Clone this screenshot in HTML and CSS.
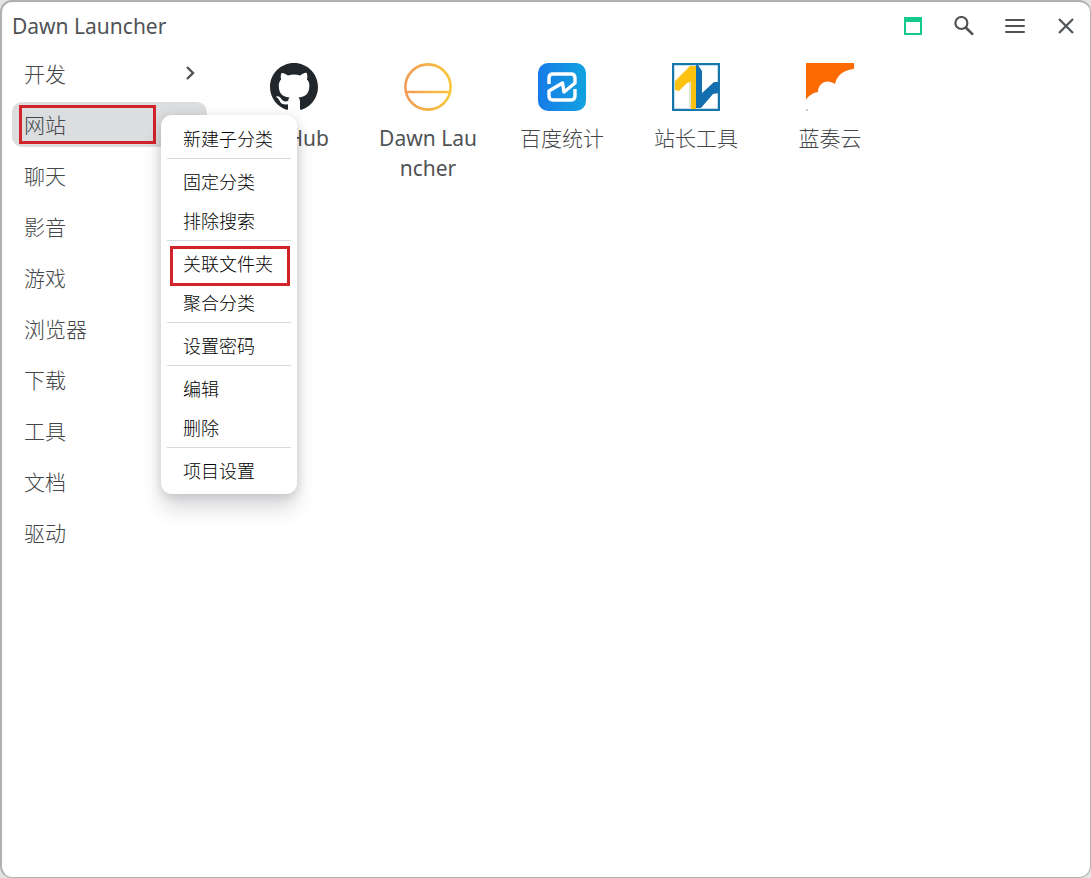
FILE: index.html
```html
<!DOCTYPE html>
<html lang="zh-CN">
<head>
<meta charset="utf-8">
<title>Dawn Launcher</title>
<link rel="stylesheet" href="styles.css">
</head>
<body>
<div class="window">
  <header class="titlebar">
    <h1 class="title">Dawn Launcher</h1>
    <div class="tools">
      <button class="tool" aria-label="窗口"><svg width="20" height="20" viewBox="0 0 20 20"><path d="M2 2h16v16H2z" fill="none" stroke="#12ca8b" stroke-width="2"/><path d="M1 1h18v5H1z" fill="#12ca8b"/></svg></button>
      <button class="tool" aria-label="搜索"><svg width="20" height="20" viewBox="0 0 20 20" fill="none" stroke="#505355" stroke-width="2.2"><circle cx="7.4" cy="7" r="6"/><path d="M11.7 11.5L19 18.6" stroke-width="2.6"/></svg></button>
      <button class="tool" aria-label="菜单"><svg width="22" height="20" viewBox="0 0 22 20" fill="none" stroke="#505355" stroke-width="2" stroke-linecap="round"><path d="M2 4h18M2 10h18M2 16h18"/></svg></button>
      <button class="tool" aria-label="关闭"><svg width="20" height="20" viewBox="0 0 20 20" fill="none" stroke="#505355" stroke-width="2.2"><path d="M3 3l14 14M17 3L3 17"/></svg></button>
    </div>
  </header>
  <div class="body">
    <nav class="sidebar">
      <button class="category">开发<svg width="12" height="14" viewBox="0 0 12 14" fill="none" stroke="#505355" stroke-width="2.4"><path d="M3 1l6 6-6 6"/></svg></button>
      <button class="category active">网站</button>
      <button class="category">聊天</button>
      <button class="category">影音</button>
      <button class="category">游戏</button>
      <button class="category">浏览器</button>
      <button class="category">下载</button>
      <button class="category">工具</button>
      <button class="category">文档</button>
      <button class="category">驱动</button>
    </nav>
    <main class="items">
      <button class="item latin">
        <svg width="48" height="48" viewBox="0 0 16 16"><path fill="#22272b" d="M8 0C3.58 0 0 3.58 0 8c0 3.54 2.29 6.53 5.47 7.59.4.07.55-.17.55-.38 0-.19-.01-.82-.01-1.49-2.01.37-2.53-.49-2.69-.94-.09-.23-.48-.94-.82-1.13-.28-.15-.68-.52-.01-.53.63-.01 1.08.58 1.23.82.72 1.21 1.87.87 2.33.66.07-.52.28-.87.51-1.07-1.78-.2-3.64-.89-3.64-3.95 0-.87.31-1.59.82-2.15-.08-.2-.36-1.02.08-2.12 0 0 .67-.21 2.2.82.64-.18 1.32-.27 2-.27s1.36.09 2 .27c1.53-1.04 2.2-.82 2.2-.82.44 1.1.16 1.92.08 2.12.51.56.82 1.27.82 2.15 0 3.07-1.87 3.75-3.65 3.95.29.25.54.73.54 1.48 0 1.07-.01 1.93-.01 2.2 0 .21.15.46.55.38A8.01 8.01 0 0 0 16 8c0-4.42-3.58-8-8-8z"/></svg>
        <span>GitHub</span>
      </button>
      <button class="item latin">
        <svg width="48" height="48" viewBox="0 0 48 48"><defs><linearGradient id="dawn" gradientUnits="userSpaceOnUse" x1="0" y1="0" x2="48" y2="0"><stop offset="0" stop-color="#f09a58"/><stop offset="1" stop-color="#f8c83c"/></linearGradient></defs><g fill="none" stroke="url(#dawn)" stroke-width="2.6"><circle cx="24" cy="24" r="22.6"/><path d="M2 29H46"/></g></svg>
        <span>Dawn Launcher</span>
      </button>
      <button class="item">
        <svg width="48" height="48" viewBox="0 0 48 48"><defs><linearGradient id="stat" x1="0" y1="0" x2="1" y2="0"><stop offset="0" stop-color="#167be8"/><stop offset="1" stop-color="#12a2df"/></linearGradient></defs><rect width="48" height="48" rx="10" fill="url(#stat)"/><path d="M11 21V15Q11 11 15 11H33Q37 11 37 15V20L26 29L24.500 20L11 28V33Q11 37 15 37H33Q37 37 37 33V26" fill="none" stroke="#fff" stroke-width="3.400" stroke-linejoin="round"/></svg>
        <span>百度统计</span>
      </button>
      <button class="item">
        <svg width="48" height="48" viewBox="0 0 48 48"><path d="M1 1h46v46H1z" fill="#fff" stroke="#1976ad" stroke-width="2.500"/><path d="M3 18L18 3H24V46H19V19L15 20L7 28L3 27z" fill="#fdc20f"/><path d="M17 20l2-1v27h-2z" fill="#e2e2dd"/><path d="M24 2h2l4 6v22l12-11h5v11L41 31L29 45h-5z" fill="#146fb1"/><path d="M30 45l12-12h3v12z" fill="#fff"/></svg>
        <span>站长工具</span>
      </button>
      <button class="item">
        <svg width="48" height="48" viewBox="0 0 48 48"><path d="M0 0H48V6C38 7 31 12 29 21C21 15 12 20 12 29C6 30 2 33 0 37z" fill="#fd6a02"/><path d="M0 46h2v2H0z" fill="#ccc"/></svg>
        <span>蓝奏云</span>
      </button>
    </main>
  </div>
  <div class="menu" role="menu">
    <button class="entry" role="menuitem">新建子分类</button>
    <hr class="divider">
    <button class="entry" role="menuitem">固定分类</button>
    <button class="entry" role="menuitem">排除搜索</button>
    <hr class="divider">
    <button class="entry marked" role="menuitem">关联文件夹</button>
    <button class="entry" role="menuitem">聚合分类</button>
    <hr class="divider">
    <button class="entry" role="menuitem">设置密码</button>
    <hr class="divider">
    <button class="entry" role="menuitem">编辑</button>
    <button class="entry" role="menuitem">删除</button>
    <hr class="divider">
    <button class="entry" role="menuitem">项目设置</button>
  </div>
</div>
</body>
</html>
```
FILE: styles.css
```css
* { box-sizing: border-box; }
body {
  margin: 0;
  background: #e4e4e4;
  color: #505355;
  font-family: "Noto Sans", "Noto Sans CJK SC", sans-serif;
}
button {
  margin: 0;
  padding: 0;
  border: 0;
  background: none;
  color: inherit;
  font: inherit;
  cursor: pointer;
}
.window {
  position: relative;
  display: flex;
  flex-direction: column;
  min-height: 100vh;
  border: 2px solid #b0b0b0;
  border-right-width: 1px;
  border-bottom-width: 1px;
  border-radius: 12px;
  background: #fff;
}
.titlebar {
  display: flex;
  align-items: center;
  justify-content: space-between;
  height: 49px;
  padding: 0 13px 1px 10px;
}
.title {
  margin: 0;
  font-size: 21px;
  font-weight: 400;
  line-height: 30px;
}
.tools { display: flex; gap: 29px; }
.tool {
  display: flex;
  align-items: center;
  justify-content: center;
  width: 22px;
  height: 30px;
}
.body { display: flex; flex: 1; }
.sidebar {
  display: flex;
  flex-direction: column;
  gap: 6px;
  width: 225px;
  padding: 0 20px 0 10px;
  flex-shrink: 0;
}
.category {
  position: relative;
  display: flex;
  align-items: center;
  justify-content: space-between;
  height: 45px;
  padding: 0 11px 2px 12px;
  border-radius: 10px;
  color: #444749;
  font-family: "Noto Sans CJK SC", sans-serif;
  font-size: 21px;
  font-weight: 300;
  line-height: 30px;
  text-align: left;
}
.active { background: #dcdddf; }
.active::after {
  content: "";
  position: absolute;
  inset: 3px 51px 3px 7px;
  border: 3px solid #d2232a;
}
.items {
  display: flex;
  flex: 1;
  flex-wrap: wrap;
  align-content: flex-start;
  padding-top: 12px;
}
.item {
  display: flex;
  flex-direction: column;
  align-items: center;
  align-self: flex-start;
  gap: 12px;
  width: 134px;
  padding: 0 14px;
  color: #444749;
  font-size: 21px;
  font-weight: 300;
  line-height: 30px;
  word-break: break-all;
}
.latin {
  color: #505355;
  font-weight: 400;
}
.menu {
  position: absolute;
  top: 113px;
  left: 159px;
  display: flex;
  flex-direction: column;
  width: 136px;
  padding: 4px 6px;
  border-radius: 11px;
  background: #fff;
  box-shadow: 0 16px 20px rgba(0, 10, 20, .13), 0 2px 12px rgba(0, 10, 20, .16);
}
.entry {
  position: relative;
  height: 39px;
  padding: 0 16px;
  color: #000;
  font-family: "Noto Sans CJK SC", sans-serif;
  font-size: 18px;
  font-weight: 300;
  line-height: 39px;
  text-align: left;
  white-space: nowrap;
}
.marked::after {
  content: "";
  position: absolute;
  inset: 2px 1px -3px 3px;
  border: 3px solid #d2232a;
}
.divider {
  width: 100%;
  height: 1px;
  margin: 0 0 3px;
  border: 0;
  background: #d8dadb;
}
```
